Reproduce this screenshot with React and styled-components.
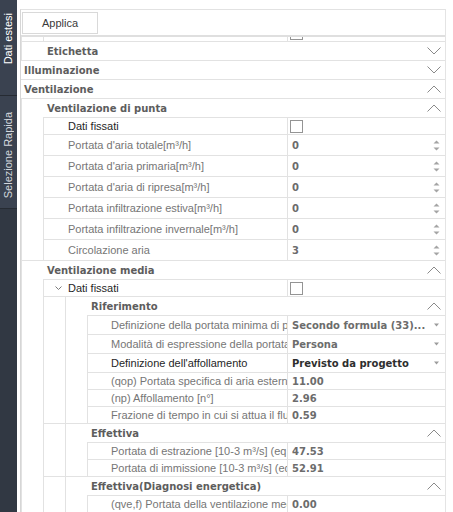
import React from "react";
import styled, { createGlobalStyle } from "styled-components";

const LINE = "#e2e2e2";

const GlobalStyle = createGlobalStyle`
  html, body { margin: 0; padding: 0; background: #ffffff; }
  body { font-family: "Liberation Sans", Arial, sans-serif; font-size: 11px; }
  * { box-sizing: border-box; }
`;

const Shell = styled.div`
  display: flex;
  width: 453px;
  height: 512px;
  overflow: hidden;
  background: #ffffff;
`;

const Sidebar = styled.nav`
  width: 17px;
  flex: none;
  display: flex;
  flex-direction: column;
  background: #313843;
`;

const SideTab = styled.div`
  height: ${(p) => p.$h}px;
  flex: none;
  display: flex;
  flex-direction: column;
  align-items: center;
  padding-top: ${(p) => p.$top}px;
  background: #3a4250;
  border-bottom: 1px solid #262b33;
  color: ${(p) => (p.$active ? "#ffffff" : "#d3d7dd")};
`;

const SideLabel = styled.span`
  writing-mode: vertical-rl;
  transform: rotate(180deg);
  font-size: 11px;
  line-height: 17px;
  white-space: nowrap;
`;

const Main = styled.main`
  flex: 1;
  min-width: 0;
  display: flex;
  flex-direction: column;
  padding: 9px 7px 0 3px;
`;

const Panel = styled.section`
  flex: 1;
  min-height: 0;
  display: flex;
  flex-direction: column;
  border-left: 1px solid #d6d6d6;
  border-top: 1px solid #e2e2e2;
  border-right: 1px solid #e4e4e4;
`;

const Toolbar = styled.div`
  height: 27px;
  flex: none;
  display: flex;
  align-items: flex-start;
  padding: 2px 0 0 1px;
  border-bottom: 2px solid #dfdfdf;
`;

const ToolButton = styled.button`
  width: 76px;
  height: 22px;
  margin: 0;
  padding: 0;
  border: 1px solid #d9d9d9;
  background: #ffffff;
  color: #3a3a3a;
  font-family: "Liberation Sans", Arial, sans-serif;
  font-size: 11px;
`;

const GridBody = styled.div`
  flex: 1;
  min-height: 0;
  overflow: hidden;
`;

const Scroller = styled.div`
  display: flex;
  flex-direction: column;
  margin-top: -${(p) => p.$offset}px;
`;

const Section = styled.div`
  flex: none;
  display: flex;
  flex-direction: column;
  border-bottom: 1px solid ${LINE};
`;

const IndentSection = styled.div`
  flex: none;
  display: flex;
  padding-left: 21px;
  border-bottom: 1px solid ${LINE};
`;

const SectionBody = styled.div`
  flex: 1;
  min-width: 0;
  display: flex;
  flex-direction: column;
  border-left: 1px solid ${LINE};
`;

const HeaderRow = styled.div`
  height: 18px;
  flex: none;
  display: flex;
  align-items: center;
  justify-content: space-between;
  padding: 0 4px 0 ${(p) => p.$pad}px;
  font-family: "DejaVu Sans", Verdana, sans-serif;
  font-weight: bold;
  font-size: 10px;
  color: #5d5d5d;
  white-space: nowrap;
`;

const Children = styled.div`
  display: flex;
  flex-direction: column;
  margin-left: ${(p) => p.$indent}px;
  border-left: 1px solid ${LINE};
  border-top: ${(p) => (p.$noTop ? "none" : `1px solid ${LINE}`)};
  & > :last-child {
    border-bottom: none;
  }
`;

const RowChildren = styled.div`
  display: flex;
  flex-direction: column;
  & > :last-child {
    border-bottom: none;
  }
`;

const PropRow = styled.div`
  box-sizing: content-box;
  height: ${(p) => p.$h}px;
  flex: none;
  display: flex;
  border-bottom: 1px solid ${LINE};
`;

const Label = styled.div`
  flex: 1;
  min-width: 0;
  display: flex;
  align-items: center;
  padding-left: ${(p) => p.$pad}px;
  overflow: hidden;
  white-space: nowrap;
  color: ${(p) => (p.$strong ? "#1f1f1f" : "#767676")};
`;

const Expander = styled.svg`
  flex: none;
  margin-right: 6px;
`;

const ValueCell = styled.div`
  width: 158px;
  flex: none;
  display: flex;
  align-items: center;
  gap: 4px;
  padding: 0 5px 0 4px;
  border-left: 1px solid ${LINE};
`;

const ValueText = styled.span`
  flex: 1;
  min-width: 0;
  overflow: hidden;
  white-space: nowrap;
  font-family: "DejaVu Sans", Verdana, sans-serif;
  font-weight: bold;
  font-size: 10px;
  color: ${(p) => (p.$strong ? "#2e2e2e" : "#6c6c6c")};
`;

const CheckBox = styled.span`
  width: 13px;
  height: 13px;
  margin-left: -2px;
  border: 1px solid #949494;
  background: #ffffff;
`;

const Chevron = ({ open }) => (
  <svg width="14" height="8" viewBox="0 0 14 8">
    <polyline
      points={open ? "0.5,7.5 7,1 13.5,7.5" : "0.5,0.5 7,7 13.5,0.5"}
      fill="none"
      stroke="#8a8a8a"
      strokeWidth="1"
    />
  </svg>
);

const SpinIcon = () => (
  <svg width="7" height="11" viewBox="0 0 7 11">
    <path d="M0.5 3.5 L3.5 0.5 L6.5 3.5 Z" fill="#a4a4a4" />
    <path d="M0.5 7.5 L3.5 10.5 L6.5 7.5 Z" fill="#a4a4a4" />
  </svg>
);

const DropIcon = () => (
  <svg width="7" height="4" viewBox="0 0 7 4">
    <path d="M1 0.5 L6 0.5 L3.5 3.5 Z" fill="#9c9c9c" />
  </svg>
);

const HEIGHTS = { check: 16, spin: 20, select: 18, text: 16 };

const tree = [
  {
    continued: true,
    open: true,
    children: [
      { continued: true, open: true, children: [{ type: "check", label: "" }] },
      { title: "Etichetta", open: false },
    ],
  },
  { title: "Illuminazione", open: false },
  {
    title: "Ventilazione",
    open: true,
    children: [
      {
        title: "Ventilazione di punta",
        open: true,
        children: [
          { type: "check", label: "Dati fissati", strong: true },
          { type: "spin", label: "Portata d'aria totale[m³/h]", value: "0" },
          { type: "spin", label: "Portata d'aria primaria[m³/h]", value: "0" },
          { type: "spin", label: "Portata d'aria di ripresa[m³/h]", value: "0" },
          { type: "spin", label: "Portata infiltrazione estiva[m³/h]", value: "0" },
          { type: "spin", label: "Portata infiltrazione invernale[m³/h]", value: "0" },
          { type: "spin", label: "Circolazione aria", value: "3" },
        ],
      },
      {
        title: "Ventilazione media",
        open: true,
        children: [
          {
            type: "check",
            label: "Dati fissati",
            strong: true,
            groups: [
              {
                title: "Riferimento",
                children: [
                  { type: "select", label: "Definizione della portata minima di progetto", value: "Secondo formula (33)..." },
                  { type: "select", label: "Modalità di espressione della portata", value: "Persona" },
                  { type: "select", label: "Definizione dell'affollamento", value: "Previsto da progetto", strong: true },
                  { type: "text", label: "(qop) Portata specifica di aria esterna", value: "11.00" },
                  { type: "text", label: "(np) Affollamento [n°]", value: "2.96" },
                  { type: "text", label: "Frazione di tempo in cui si attua il flusso", value: "0.59" },
                ],
              },
              {
                title: "Effettiva",
                children: [
                  { type: "text", label: "Portata di estrazione [10-3 m³/s] (eq. 35)", value: "47.53" },
                  { type: "text", label: "Portata di immissione [10-3 m³/s] (eq. 36)", value: "52.91" },
                ],
              },
              {
                title: "Effettiva(Diagnosi energetica)",
                children: [
                  { type: "text", label: "(qve,f) Portata della ventilazione meccanica", value: "0.00" },
                ],
              },
            ],
          },
        ],
      },
    ],
  },
];

function Leaf({ item, pad }) {
  const expandable = Boolean(item.groups);
  return (
    <PropRow $h={HEIGHTS[item.type]}>
      <Label $pad={expandable ? 11 : pad} $strong={item.strong}>
        {expandable && (
          <Expander width="7" height="4" viewBox="0 0 7 4">
            <polyline points="0.5,0.5 3.5,3.5 6.5,0.5" fill="none" stroke="#7a7a7a" strokeWidth="1" />
          </Expander>
        )}
        {item.label}
      </Label>
      <ValueCell>
        {item.type === "check" ? (
          <CheckBox />
        ) : (
          <ValueText $strong={item.strong}>{item.value}</ValueText>
        )}
        {item.type === "spin" && <SpinIcon />}
        {item.type === "select" && <DropIcon />}
      </ValueCell>
    </PropRow>
  );
}

function NestedGroup({ group }) {
  return (
    <IndentSection>
      <SectionBody>
        <HeaderRow $pad={25}>
          {group.title}
          <Chevron open />
        </HeaderRow>
        <Children $indent={21}>
          {group.children.map((c, i) => (
            <Leaf key={i} item={c} pad={23} />
          ))}
        </Children>
      </SectionBody>
    </IndentSection>
  );
}

function LevelOneItem({ node }) {
  return (
    <>
      <Leaf item={node} pad={24} />
      {node.groups && (
        <RowChildren>
          {node.groups.map((g, i) => (
            <NestedGroup key={i} group={g} />
          ))}
        </RowChildren>
      )}
    </>
  );
}

function SubGroup({ node }) {
  return (
    <Section>
      {!node.continued && (
        <HeaderRow $pad={25}>
          {node.title}
          <Chevron open={node.open} />
        </HeaderRow>
      )}
      {node.open && (
        <Children $indent={21} $noTop={node.continued}>
          {node.children.map((c, i) => (
            <LevelOneItem key={i} node={c} />
          ))}
        </Children>
      )}
    </Section>
  );
}

function RootGroup({ node }) {
  return (
    <Section>
      {!node.continued && (
        <HeaderRow $pad={3}>
          {node.title}
          <Chevron open={node.open} />
        </HeaderRow>
      )}
      {node.open && (
        <Children $indent={0} $noTop={node.continued}>
          {node.children.map((c, i) => (
            <SubGroup key={i} node={c} />
          ))}
        </Children>
      )}
    </Section>
  );
}

export default function App() {
  return (
    <>
      <GlobalStyle />
      <Shell>
        <Sidebar>
          <SideTab $h={96} $top={13} $active>
            <SideLabel>Dati estesi</SideLabel>
          </SideTab>
          <SideTab $h={113} $top={16}>
            <SideLabel>Selezione Rapida</SideLabel>
          </SideTab>
        </Sidebar>
        <Main>
          <Panel>
            <Toolbar>
              <ToolButton>Applica</ToolButton>
            </Toolbar>
            <GridBody>
              <Scroller $offset={12}>
                {tree.map((n, i) => (
                  <RootGroup key={i} node={n} />
                ))}
              </Scroller>
            </GridBody>
          </Panel>
        </Main>
      </Shell>
    </>
  );
}
